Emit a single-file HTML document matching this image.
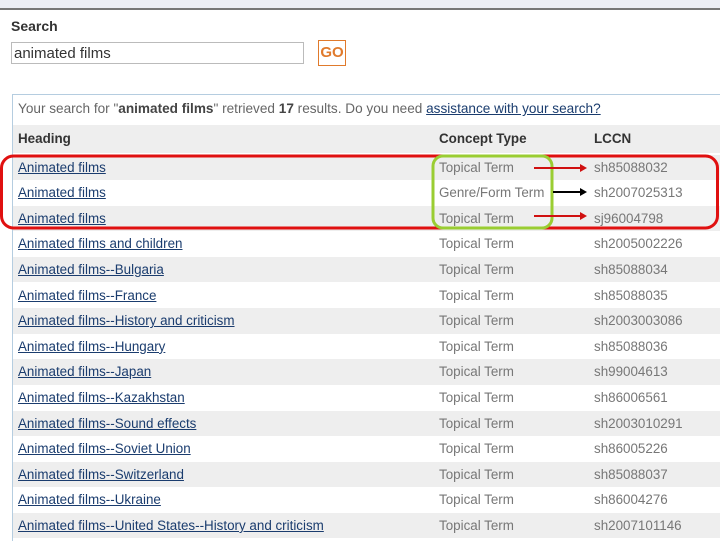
<!DOCTYPE html>
<html><head><style>
body{margin:0;width:720px;height:540px;overflow:hidden;background:#fff;font-family:"Liberation Sans",sans-serif;position:relative}
.top{position:absolute;left:0;top:0;width:720px;height:8px;background:#eceef5;border-bottom:2px solid #777}
.lbl{position:absolute;left:11px;top:18px;font-weight:bold;font-size:14px;color:#333}
.inp{position:absolute;left:11px;top:42px;height:22px;border:1px solid #bbb;font-size:15px;line-height:22px;padding-left:2px;color:#333;box-sizing:border-box;width:293px}
.go{position:absolute;left:318px;top:40px;width:26px;height:24px;border:1px solid #e07a2c;color:#e07a2c;font-weight:bold;font-size:15px;line-height:24px;text-align:center}
.box{position:absolute;left:12px;top:94px;width:720px;height:446px;border-left:1px solid #b5cde0;border-top:1px solid #b5cde0}
.msg{position:absolute;left:18px;top:101px;font-size:13.6px;color:#666;white-space:nowrap}
.msg b{color:#444}.msg a{color:#1a3c6e;text-decoration:underline}
.row{position:absolute;left:13px;width:707px;height:25.6px;font-size:13.4px;line-height:25.6px;white-space:nowrap}
.row.g{background:#eeeeee}
.row span{position:absolute}
.c1{left:5px}.c1 a{color:#1a3c6e;text-decoration:underline}
.c2{left:426px;color:#777}.c3{left:581px;color:#777}
.hd{font-weight:bold;color:#333}.hd span{color:#333}
</style></head><body>
<div class="top"></div>
<div class="lbl">Search</div>
<div class="inp">animated films</div>
<div class="go">GO</div>
<div class="box"></div>
<div class="msg">Your search for "<b>animated films</b>" retrieved <b>17</b> results. Do you need <a>assistance with your search?</a></div>
<div class="row g hd" style="top:125px;height:28px;line-height:28px"><span class="c1">Heading</span><span class="c2">Concept Type</span><span class="c3">LCCN</span></div>
<div class="row g" style="top:154.5px"><span class="c1"><a>Animated films</a></span><span class="c2">Topical Term</span><span class="c3">sh85088032</span></div>
<div class="row" style="top:180.1px"><span class="c1"><a>Animated films</a></span><span class="c2">Genre/Form Term</span><span class="c3">sh2007025313</span></div>
<div class="row g" style="top:205.7px"><span class="c1"><a>Animated films</a></span><span class="c2">Topical Term</span><span class="c3">sj96004798</span></div>
<div class="row" style="top:231.3px"><span class="c1"><a>Animated films and children</a></span><span class="c2">Topical Term</span><span class="c3">sh2005002226</span></div>
<div class="row g" style="top:256.9px"><span class="c1"><a>Animated films--Bulgaria</a></span><span class="c2">Topical Term</span><span class="c3">sh85088034</span></div>
<div class="row" style="top:282.5px"><span class="c1"><a>Animated films--France</a></span><span class="c2">Topical Term</span><span class="c3">sh85088035</span></div>
<div class="row g" style="top:308.1px"><span class="c1"><a>Animated films--History and criticism</a></span><span class="c2">Topical Term</span><span class="c3">sh2003003086</span></div>
<div class="row" style="top:333.7px"><span class="c1"><a>Animated films--Hungary</a></span><span class="c2">Topical Term</span><span class="c3">sh85088036</span></div>
<div class="row g" style="top:359.3px"><span class="c1"><a>Animated films--Japan</a></span><span class="c2">Topical Term</span><span class="c3">sh99004613</span></div>
<div class="row" style="top:384.9px"><span class="c1"><a>Animated films--Kazakhstan</a></span><span class="c2">Topical Term</span><span class="c3">sh86006561</span></div>
<div class="row g" style="top:410.5px"><span class="c1"><a>Animated films--Sound effects</a></span><span class="c2">Topical Term</span><span class="c3">sh2003010291</span></div>
<div class="row" style="top:436.1px"><span class="c1"><a>Animated films--Soviet Union</a></span><span class="c2">Topical Term</span><span class="c3">sh86005226</span></div>
<div class="row g" style="top:461.7px"><span class="c1"><a>Animated films--Switzerland</a></span><span class="c2">Topical Term</span><span class="c3">sh85088037</span></div>
<div class="row" style="top:487.3px"><span class="c1"><a>Animated films--Ukraine</a></span><span class="c2">Topical Term</span><span class="c3">sh86004276</span></div>
<div class="row g" style="top:512.9px"><span class="c1"><a>Animated films--United States--History and criticism</a></span><span class="c2">Topical Term</span><span class="c3">sh2007101146</span></div>
<svg width="720" height="540" style="position:absolute;left:0;top:0">
<rect x="1.5" y="156" width="716" height="72" rx="12" fill="none" stroke="#e01010" stroke-width="3"/>
<rect x="433" y="156" width="119" height="72" rx="10" fill="none" stroke="#9acd32" stroke-width="3"/>
<line x1="534" y1="168" x2="580" y2="168" stroke="#d01010" stroke-width="2"/>
<polygon points="580,164 587,168 580,172" fill="#d01010"/>
<line x1="553" y1="192" x2="580" y2="192" stroke="#000" stroke-width="2"/>
<polygon points="580,188 587,192 580,196" fill="#000"/>
<line x1="534" y1="216" x2="580" y2="216" stroke="#d01010" stroke-width="2"/>
<polygon points="580,212 587,216 580,220" fill="#d01010"/>
</svg>
</body></html>
